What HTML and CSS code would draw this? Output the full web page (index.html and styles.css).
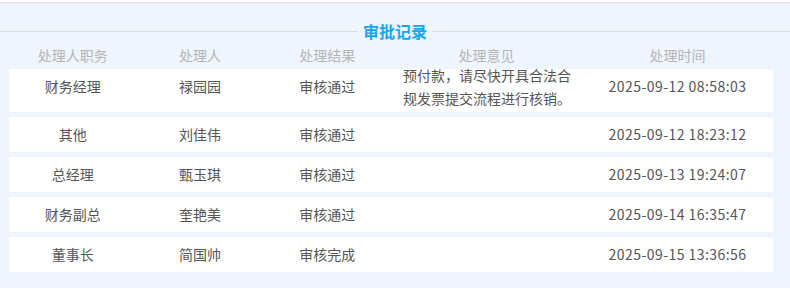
FILE: index.html
```html
<!DOCTYPE html>
<html lang="zh-CN">
<head>
<meta charset="utf-8">
<title>审批记录</title>
<link rel="stylesheet" href="styles.css">
</head>
<body>
<div class="panel">
  <div class="divider">
    <span class="divider-line"></span>
    <span class="divider-title">审批记录</span>
    <span class="divider-line"></span>
  </div>
  <div class="grid head">
    <div class="cell">处理人职务</div>
    <div class="cell">处理人</div>
    <div class="cell">处理结果</div>
    <div class="cell">处理意见</div>
    <div class="cell">处理时间</div>
  </div>
  <div class="body">
    <div class="grid row row-first">
      <div class="cell">财务经理</div>
      <div class="cell">禄园园</div>
      <div class="cell">审核通过</div>
      <div class="cell opinion">同意支付该笔设备采购合同<br>预付款，请尽快开具合法合<br>规发票提交流程进行核销。</div>
      <div class="cell time">2025-09-12 08:58:03</div>
    </div>
    <div class="grid row">
      <div class="cell">其他</div>
      <div class="cell">刘佳伟</div>
      <div class="cell">审核通过</div>
      <div class="cell opinion"></div>
      <div class="cell time">2025-09-12 18:23:12</div>
    </div>
    <div class="grid row">
      <div class="cell">总经理</div>
      <div class="cell">甄玉琪</div>
      <div class="cell">审核通过</div>
      <div class="cell opinion"></div>
      <div class="cell time">2025-09-13 19:24:07</div>
    </div>
    <div class="grid row">
      <div class="cell">财务副总</div>
      <div class="cell">奎艳美</div>
      <div class="cell">审核通过</div>
      <div class="cell opinion"></div>
      <div class="cell time">2025-09-14 16:35:47</div>
    </div>
    <div class="grid row">
      <div class="cell">董事长</div>
      <div class="cell">简国帅</div>
      <div class="cell">审核完成</div>
      <div class="cell opinion"></div>
      <div class="cell time">2025-09-15 13:36:56</div>
    </div>
  </div>
</div>
</body>
</html>
```

FILE: styles.css
```css
html, body {
  margin: 0;
  padding: 0;
  background: #ffffff;
}

body {
  font-family: "Noto Sans CJK SC", "Noto Sans", sans-serif;
  font-size: 14px;
  color: #555555;
}

.panel {
  margin-top: 2px;
  border-top: 1px solid #dcdcdc;
  background: #eef5fd;
  height: 286px;
  box-sizing: border-box;
  overflow: hidden;
}

.divider {
  display: flex;
  align-items: center;
  margin-top: 17px;
  height: 22px;
}

.divider-line {
  flex: 1;
  height: 1px;
  background: #dcdcdc;
}

.divider-title {
  padding: 0 5px;
  font-size: 16px;
  font-weight: bold;
  line-height: 22px;
  color: #13a6f4;
}

.grid {
  display: grid;
  grid-template-columns: 2fr 2fr 2fr 3fr 3fr;
  grid-template-rows: 100%;
  margin: 0 17px 0 9px;
  align-items: center;
}

.head {
  height: 27px;
  color: #b5b5b5;
}

.cell {
  text-align: center;
  line-height: 21px;
}

.time {
  letter-spacing: 0.45px;
}

.body {
  height: 220px;
  overflow: hidden;
  display: flex;
  flex-direction: column;
  gap: 5px;
}

.row {
  background: #ffffff;
  height: 35px;
  flex: none;
}

.row-first {
  height: 51px;
  margin-top: -8px;
}

.opinion {
  text-align: left;
  padding: 0 8px 0 12px;
  white-space: nowrap;
}

.row-first .opinion {
  align-self: unsafe end;
  line-height: 23px;
  padding-bottom: 2px;
}
```
